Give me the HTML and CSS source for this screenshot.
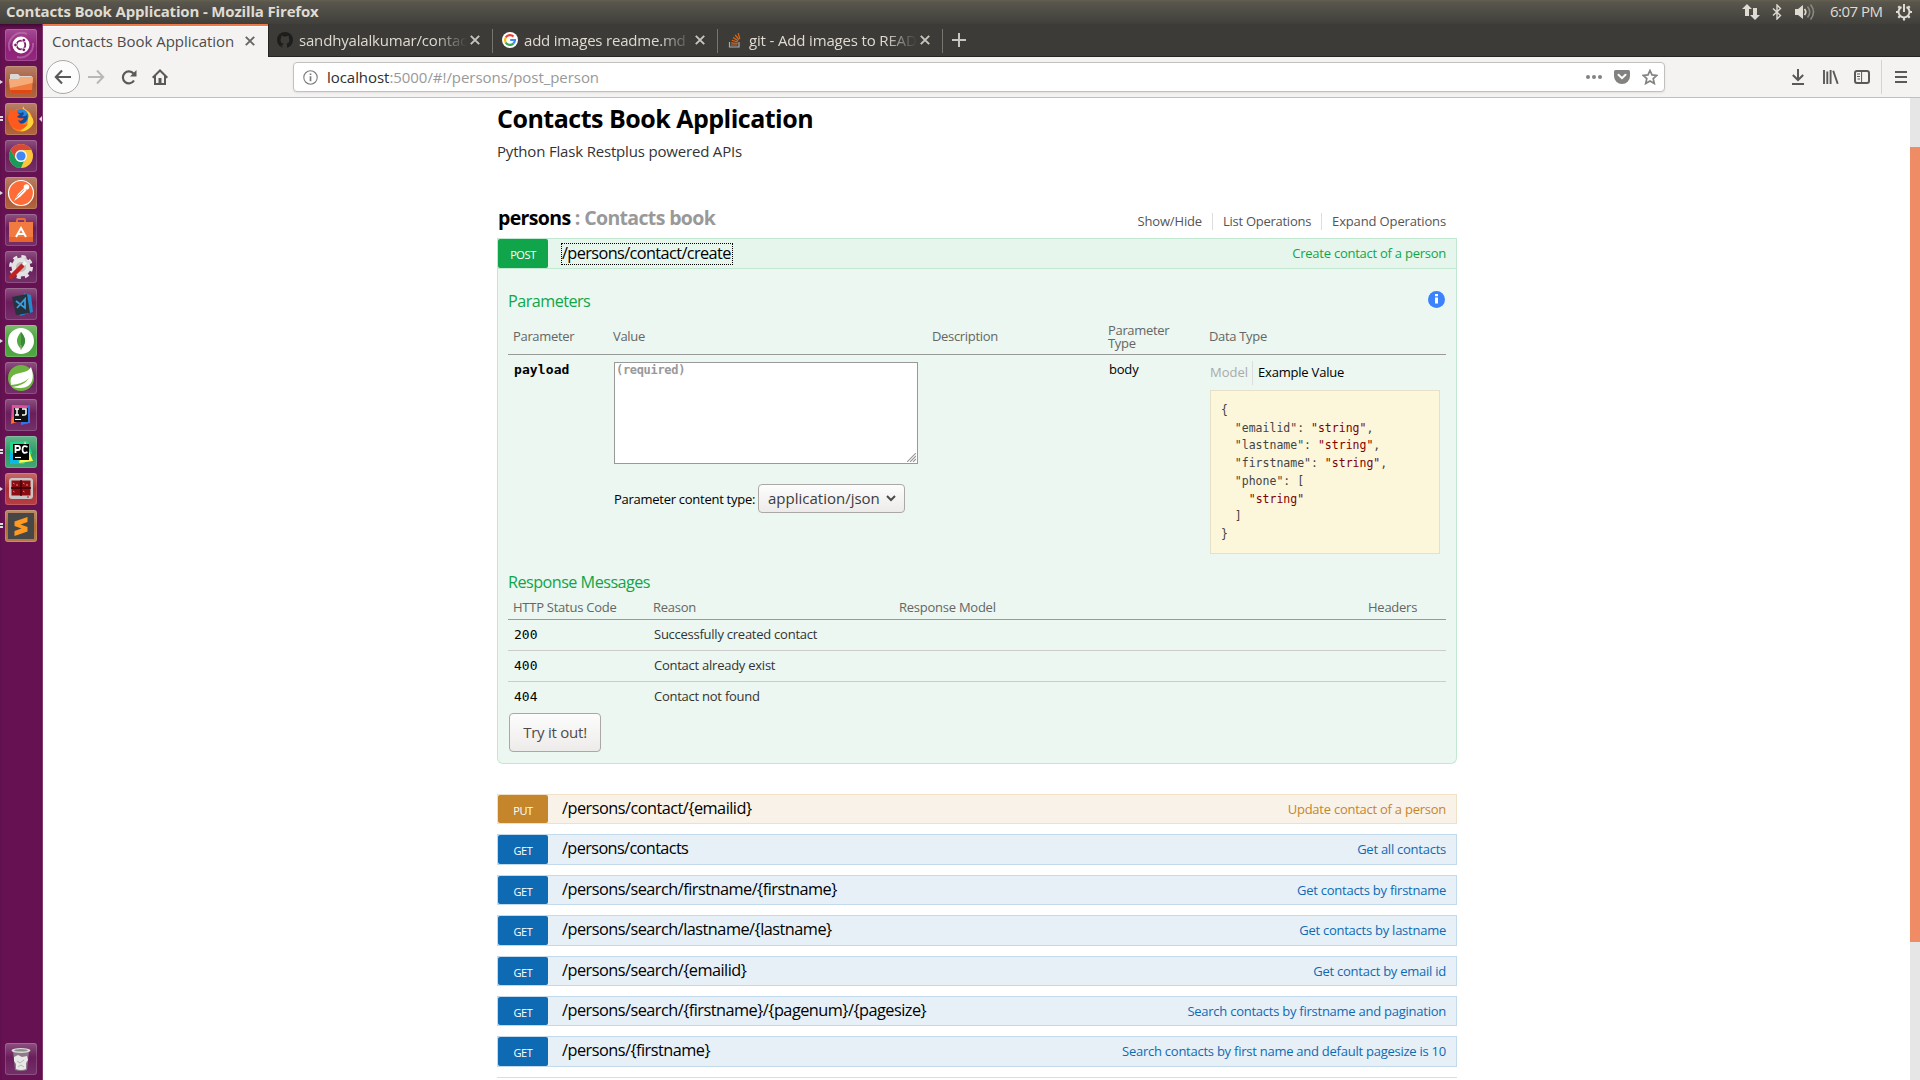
FILE: index.html
```html
<!DOCTYPE html>
<html lang="en">
<head>
<meta charset="utf-8">
<title>Contacts Book Application</title>
<link rel="stylesheet" href="styles.css">
</head>
<body>
<header class="topbar">
  <span class="topbar-title">Contacts Book Application - Mozilla Firefox</span>
  <div class="indicators">
    <svg width="18" height="18" viewBox="0 0 18 18" fill="#dfdbd2"><path d="M5 1l5 5H7v7H3V6H0zM13 17l-5-5h3V5h4v7h3z"/></svg>
    <svg class="i-bt" width="10" height="16" viewBox="0 0 10 16" fill="none" stroke="#dfdbd2" stroke-width="1.4"><path d="M1 4.5l7.500 7L5 15V1l3.500 3.500L1 11.500"/></svg>
    <svg class="i-vol" width="20" height="18" viewBox="0 0 20 18"><path d="M0 6h3l5-4v14l-5-4H0z" fill="#dfdbd2"/><path d="M9.500 6q2.500 3 0 6" fill="none" stroke="#dfdbd2" stroke-width="1.700"/><path d="M12.500 3.500q4.500 5.500 0 11M15.500 1.500q6 7.500 0 15" fill="none" stroke="#8b887f" stroke-width="1.600"/></svg>
    <span class="clock">6:07 PM</span>
    <svg class="i-gear" width="18" height="18" viewBox="0 0 18 18" fill="none" stroke="#dfdbd2"><path d="M6.500 4A5.500 5.500 0 1 0 11.500 4" stroke-width="2"/><path d="M9 1v8" stroke-width="2"/><path d="M9 15v2.500M1 9h2.500M14.500 9H17M3.300 14.700l1.800-1.800M14.700 14.700l-1.800-1.800M3.300 3.300l1.800 1.800M14.700 3.300l-1.800 1.800" stroke-width="2.200"/></svg>
  </div>
</header>
<div class="desktop">
  <nav class="launcher">
    <div class="tile t-ubuntu"><svg viewBox="0 0 32 32"><path d="M5 22A13 13 0 0 1 22 5M28 14A13 13 0 0 1 12 28" fill="none" stroke="#c27cb2" stroke-width="2" opacity=".6"/><circle cx="16" cy="16" r="8.500" fill="#fff"/><circle cx="16" cy="16" r="4.300" fill="none" stroke="#7b1a66" stroke-width="1.800"/><g fill="#7b1a66" stroke="#fff" stroke-width=".8"><circle cx="10.500" cy="16" r="1.800"/><circle cx="18.800" cy="11.200" r="1.800"/><circle cx="18.800" cy="20.800" r="1.800"/></g></svg></div>
    <div class="tile t-tan"><i class="run"></i><svg viewBox="0 0 32 32"><path d="M5 9q0-1 1-1h7l2 2h11q1 0 1 1v7H5z" fill="#dcd9d5"/><path d="M4 13h10l2-2h12l-1 14q0 2-2 2H7q-2 0-2-2z" fill="#f07a3c"/><path d="M4 13h10l2-2h12l-.4 6L5 22z" fill="#f6aa78"/><path d="M5 24h22v1q0 2-2 2H7q-2 0-2-2z" fill="#dd4814"/></svg></div>
    <div class="tile t-tan"><i class="run two"></i><i class="focus"></i><svg viewBox="0 0 32 32"><circle cx="16" cy="17" r="11.500" fill="#ff7a17"/><path d="M18 3q1 3 3 4 4 2 5 6 5 6 0 11-5 5-11 4 8-4 8-11 0-5-4-8-2-3-1-6z" fill="#ffd43a"/><circle cx="16" cy="13.500" r="7.500" fill="#2a86dd"/><path d="M12 9q3 2 6 0 2 2-1 4 5 1 5-3 2 7-3 10-7 2-9-3-1-4 2-8z" fill="#124a9c"/><path d="M5 6q2 2 4 2l3-1q0 3 3 5-2 0-3 2 4 2 7 1-2 4-6 2 3 7 10 4-5 7-12 5-8-3-8-12z" fill="#ff5a1d"/></svg></div>
    <div class="tile t-dim"><svg viewBox="0 0 32 32"><circle cx="16" cy="16" r="12" fill="#fbc63b"/><path d="M5.600 10A12 12 0 0 1 26.400 10H16a6 6 0 0 0-5.200 9z" fill="#d8483a"/><path d="M5.600 10l5.200 9a6 6 0 0 0 8 2.300L16 28A12 12 0 0 1 5.600 10z" fill="#199c58"/><circle cx="16" cy="16" r="6" fill="#f4f4f4"/><circle cx="16" cy="16" r="4.600" fill="#4285f4"/></svg></div>
    <div class="tile t-tan"><i class="run"></i><svg viewBox="0 0 32 32"><circle cx="16" cy="16" r="12.500" fill="#ff6c37" stroke="#fff" stroke-width="1.200"/><path d="M9 24l4-7 6-6 2.500 2.500-6 6z" fill="#fff"/><path d="M11 21l8-8" stroke="#ff6c37" stroke-width=".7"/><circle cx="21.500" cy="10" r="2.800" fill="#fff"/></svg></div>
    <div class="tile t-dim"><svg viewBox="0 0 32 32"><path d="M12 10V6q0-1 1-1h6q1 0 1 1v4" fill="none" stroke="#e4683a" stroke-width="2"/><path d="M4 8h24v20H4z" fill="#f07a40"/><path d="M4 23h24v5H4z" fill="#e8642a"/><path d="M11 23l5-9 5 9M12 20h8" fill="none" stroke="#fff" stroke-width="2"/></svg></div>
    <div class="tile t-dim"><svg viewBox="0 0 32 32"><circle cx="16" cy="16" r="9.500" fill="#e3e3e3"/><circle cx="16" cy="16" r="10.500" fill="none" stroke="#e3e3e3" stroke-width="3" stroke-dasharray="4.200 4.050"/><circle cx="16" cy="16" r="5" fill="#bdbdbd"/><path d="M6 26l11-11" stroke="#c5201f" stroke-width="4.500" stroke-linecap="round"/><path d="M18 14l5-5" stroke="#f4f4f4" stroke-width="3"/><path d="M21 5a4 4 0 1 0 6 5l-4 0-1-1z" fill="#d6d6d6"/></svg></div>
    <div class="tile t-dim"><svg viewBox="0 0 32 32"><path d="M19 5l7 2 2 17-13 4z" fill="#2489ca"/><path d="M7 9l15-3 3 19-14 2z" fill="#26333f"/><path d="M11 13l9 7v-9l-8 9" fill="none" stroke="#3a9ee0" stroke-width="1.800"/></svg></div>
    <div class="tile t-green"><i class="run"></i><svg viewBox="0 0 32 32"><circle cx="16" cy="16" r="13" fill="#fff"/><path d="M16 7q8 9 0 17-8-8 0-17z" fill="#4faa41"/><path d="M16 7q8 9 0 17z" fill="#3c8a38"/><path d="M16 20v5" stroke="#b0a98c" stroke-width="1"/></svg></div>
    <div class="tile t-dim"><svg viewBox="0 0 32 32"><circle cx="16" cy="16" r="13" fill="#6db33f"/><path d="M26 5q3 8 1 14-3 7-11 7-5 0-9-1 12-1 17-9-6 6-18 7-2-9 5-11 4-1 8-2 5-1 7-5z" fill="#fff"/></svg></div>
    <div class="tile t-dim"><svg viewBox="0 0 32 32"><path d="M7 6l13 1-8 16-6 2z" fill="#fc6e3a"/><path d="M15 6h10v18l-9 2z" fill="#3574e8"/><path d="M7 7l5-1 10 1v9L7 18z" fill="#e14f9f"/><path d="M9 9h14v14H9z" fill="#111"/><path d="M10 10h4M12 10v6M10 16h4M17 10h4v5q0 1-2 1h-2" fill="none" stroke="#fff" stroke-width="1.500"/><path d="M10 20.500h6" stroke="#fff"/></svg></div>
    <div class="tile t-teal"><i class="run two"></i><svg viewBox="0 0 32 32"><path d="M5 6l18-1 4 12-8 11H5z" fill="#21d789"/><path d="M20 5l8 20-14 2z" fill="#fcf84a"/><path d="M5 14l10 14H5z" fill="#0bb8e8"/><path d="M8 8h16v16H8z" fill="#000"/><path d="M10.500 17v-7h2.500q2 0 2 2t-2 2h-2.500M22.500 11q-5-2.500-5 2.500t5 2.500" fill="none" stroke="#fff" stroke-width="1.800"/><path d="M10 21.500h6" stroke="#fff" stroke-width="1.200"/></svg></div>
    <div class="tile t-red"><i class="run"></i><svg viewBox="0 0 32 32"><rect x="4" y="5" width="24" height="21" rx="3" fill="#c8c6c4"/><rect x="6.500" y="7.500" width="19" height="15" fill="#8b0c12"/><path d="M16 7v16M6 15h20" stroke="#330407" stroke-width="1.300"/><path d="M8 10l1.500 1M18 10l1.500 1M8 18l1.500 1M18 18l1.500 1M11 12h2M21 12h2" stroke="#f08080"/><path d="M22 24h2" stroke="#d00"/></svg></div>
    <div class="tile t-subl"><i class="run two"></i><svg viewBox="0 0 32 32"><rect x="3" y="3" width="26" height="26" fill="#474747"/><path d="M9.500 11.500l13-4.500v5l-7 2.500 7 2.500v4.500l-13 4.500v-5l7-2.500-7-2.500z" fill="#ff9a1f"/></svg></div>
    <div class="tile t-dim trash"><svg viewBox="0 0 32 32"><path d="M8 8h16l-2 19q-6 2-12 0z" fill="#8d7a8c"/><path d="M9 14l4-2 4 2 5-1 1 4-2 3v6q-5 2-10 0v-5l-2-3z" fill="#e8e8e6"/><path d="M12 18l3 2 4-3M13 24l3-2 3 2" fill="none" stroke="#b5b5b2"/><ellipse cx="16" cy="7.500" rx="9.500" ry="2.600" fill="#dcdcd8"/><ellipse cx="16" cy="7.300" rx="7" ry="1.200" fill="#8e8f88"/></svg></div>
  </nav>
  <div class="window">
    <div class="tabs">
      <div class="tab active"><span class="tab-label">Contacts Book Application</span><svg class="x" viewBox="0 0 10 10"><path d="M.8.8l8.400 8.400M9.200.8L.8 9.200"/></svg></div>
      <div class="tab"><svg class="fav" viewBox="0 0 16 16"><circle cx="8" cy="8" r="8" fill="#1d1d1b"/><path d="M6 16v-2.500q-3 .5-3.500-1.700M6 16v-3q0-1 .6-1.400Q3.500 11 3.500 8q0-1.400.8-2.200-.3-1 .1-2.200 1 0 2.200 1 1.400-.4 2.800 0 1.200-1 2.200-1 .4 1.200.1 2.200.8.800.8 2.200 0 3-3.100 3.600.6.500.6 1.600V16" fill="#3c3b37"/></svg><span class="tab-label fade t2">sandhyalalkumar/contac</span><svg class="x" viewBox="0 0 10 10"><path d="M.8.8l8.400 8.400M9.200.8L.8 9.200"/></svg></div>
      <div class="tab"><svg class="fav" viewBox="0 0 16 16"><circle cx="8" cy="8" r="8" fill="#fff"/><g fill="none" stroke-width="2.200"><path d="M11.500 4.500A5 5 0 0 0 3.700 5.500" stroke="#ea4335"/><path d="M3.700 5.500a5 5 0 0 0 0 5" stroke="#fbbc05"/><path d="M3.700 10.500a5 5 0 0 0 7.600 1.200" stroke="#34a853"/><path d="M11.300 11.700A5 5 0 0 0 13 8H8.200" stroke="#4285f4"/></g></svg><span class="tab-label fade t3">add images readme.md -</span><svg class="x" viewBox="0 0 10 10"><path d="M.8.8l8.400 8.400M9.200.8L.8 9.200"/></svg></div>
      <div class="tab"><svg class="fav" viewBox="0 0 16 16"><path d="M2.500 10v5h9.500v-5" fill="none" stroke="#a9adb0" stroke-width="1.200"/><path d="M4 13h6.500M4.200 10.800l6.400.7M4.800 8.200l6 1.800M6 5.400l5.200 3.300M8.200 3l3.800 4.700M11.200 1.200l1.600 5.600" stroke="#d96a1b" stroke-width="1.200"/></svg><span class="tab-label fade t4">git - Add images to READ</span><svg class="x" viewBox="0 0 10 10"><path d="M.8.8l8.400 8.400M9.200.8L.8 9.200"/></svg></div>
      <svg class="plus" width="14" height="14" viewBox="0 0 14 14"><path d="M7 0v14M0 7h14" stroke="#c9c6bf" stroke-width="2"/></svg>
    </div>
    <div class="toolbar">
      <div class="back"><svg width="18" height="16" viewBox="0 0 18 16"><path d="M8 1.500L1.800 8 8 14.500M2 8h15" fill="none" stroke="#5a5957" stroke-width="2.100"/></svg></div>
      <svg class="fwd" width="18" height="16" viewBox="0 0 18 16"><path d="M10 1.500L16.200 8 10 14.500M16 8H1" fill="none" stroke="#b9b8b6" stroke-width="2"/></svg>
      <svg class="reload" width="16" height="16" viewBox="0 0 16 16"><path d="M13 11.500A6 6 0 1 1 12.500 4.500" fill="none" stroke="#5a5957" stroke-width="2.200"/><path d="M15.500 1v6.500H9z" fill="#5a5957"/></svg>
      <svg class="home" width="16" height="16" viewBox="0 0 16 16"><path d="M.7 8.700L8 1.500l7.300 7.200M3 7v8h10V7" fill="none" stroke="#5a5957" stroke-width="2"/><path d="M6.500 15V9h3v6z" fill="#5a5957"/></svg>
      <div class="urlbar">
        <svg class="info" width="15" height="15" viewBox="0 0 15 15"><circle cx="7.500" cy="7.500" r="6.700" fill="none" stroke="#7c7c7b" stroke-width="1.100"/><path d="M7.500 3.400v1.700M7.500 6.300v5" stroke="#7c7c7b" stroke-width="1.700"/></svg>
        <span class="url"><b>localhost</b>:5000/#!/persons/post_person</span>
        <svg class="dots" width="16" height="4" viewBox="0 0 16 4" fill="#838280"><circle cx="2" cy="2" r="2"/><circle cx="8" cy="2" r="2"/><circle cx="14" cy="2" r="2"/></svg>
        <svg class="pocket" width="16" height="14" viewBox="0 0 16 14"><path d="M1.500 0h13Q16 0 16 1.500V6A8 8 0 0 1 0 6V1.500Q0 0 1.500 0z" fill="#838280"/><path d="M4.500 4.800L8 8.200l3.500-3.400" fill="none" stroke="#fff" stroke-width="2" stroke-linecap="round"/></svg>
        <svg class="star" width="16" height="16" viewBox="0 0 16 16"><path d="M8 1.500l2 4.400 4.800.5-3.600 3.200 1.100 4.900L8 12l-4.300 2.500 1.100-4.900L1.200 6.400 6 5.900z" fill="none" stroke="#838280" stroke-width="1.700"/></svg>
      </div>
      <svg class="dl" width="12" height="16" viewBox="0 0 12 16"><path d="M6 0v10.500M.8 6L6 11l5.200-5M0 15h12" fill="none" stroke="#5a5957" stroke-width="2"/></svg>
      <svg class="lib" width="16" height="14" viewBox="0 0 16 14"><path d="M1 0v14M4.300 1.500V14M7.600 0v14M10.200 .8l4.500 13" fill="none" stroke="#5a5957" stroke-width="1.900"/></svg>
      <svg class="side" width="16" height="14" viewBox="0 0 16 14"><rect x="1" y="1" width="14" height="12" rx="2" fill="none" stroke="#5a5957" stroke-width="2"/><path d="M7.600 1v12M3 4h3M3 6.500h3M3.500 9H6" stroke="#5a5957"/></svg>
      <span class="sep"></span>
      <svg class="menu" width="12" height="12" viewBox="0 0 12 12"><path d="M0 1h12M0 6h12M0 11h12" stroke="#5a5957" stroke-width="2"/></svg>
    </div>
    <div class="viewport">
      <main class="page">
        <h1>Contacts Book Application</h1>
        <p class="lead">Python Flask Restplus powered APIs</p>
        <div class="resource">
          <h2>persons <span>: Contacts book</span></h2>
          <ul class="ops"><li class="o1">Show/Hide</li><li class="o2">List Operations</li><li class="o3">Expand Operations</li></ul>
        </div>
        <div class="op post"><span class="verb">POST</span><span class="path focused">/persons/contact/create</span><span class="desc">Create contact of a person</span></div>
        <section class="panel">
          <div class="panel-head"><h4>Parameters</h4><svg width="17" height="17" viewBox="0 0 17 17"><circle cx="8.500" cy="8.500" r="8.500" fill="#3b82fb"/><path d="M7 3h3v2.300H7zM7 6.500h3v6H7z" fill="#fff"/></svg></div>
          <div class="params head"><span class="c1">Parameter</span><span>Value</span><span>Description</span><span class="ptype">Parameter Type</span><span>Data Type</span></div>
          <div class="params row">
            <span class="mono pname">payload</span>
            <div class="value">
              <div class="textarea">(required)<svg width="9" height="9" viewBox="0 0 9 9"><path d="M0 9l9-9M3 9l6-6M6 9l3-3" stroke="#999" stroke-width="1.100"/></svg></div>
              <div class="ctype"><span>Parameter content type:</span><div class="select">application/json<svg width="10" height="7" viewBox="0 0 10 7"><path d="M1 1l4 4 4-4" fill="none" stroke="#4c4c4c" stroke-width="2"/></svg></div></div>
            </div>
            <span></span>
            <span class="pin">body</span>
            <div class="dtype">
              <div class="switch"><span class="model">Model</span><span class="example">Example Value</span></div>
<pre class="snippet">{
  "emailid": <b>"string"</b>,
  "lastname": <b>"string"</b>,
  "firstname": <b>"string"</b>,
  "phone": [
    <b>"string"</b>
  ]
}</pre>
            </div>
          </div>
          <h4 class="rm">Response Messages</h4>
          <div class="resp head"><span>HTTP Status Code</span><span>Reason</span><span>Response Model</span><span>Headers</span></div>
          <div class="resp row"><span class="mono">200</span><span>Successfully created contact</span></div>
          <div class="resp row"><span class="mono">400</span><span>Contact already exist</span></div>
          <div class="resp row"><span class="mono">404</span><span>Contact not found</span></div>
          <div class="try">Try it out!</div>
        </section>
        <div class="oplist">
          <div class="op put"><span class="verb">PUT</span><span class="path tpl">/persons/contact/{emailid}</span><span class="desc">Update contact of a person</span></div>
          <div class="op get"><span class="verb">GET</span><span class="path">/persons/contacts</span><span class="desc">Get all contacts</span></div>
          <div class="op get"><span class="verb">GET</span><span class="path tpl">/persons/search/firstname/{firstname}</span><span class="desc">Get contacts by firstname</span></div>
          <div class="op get"><span class="verb">GET</span><span class="path tpl">/persons/search/lastname/{lastname}</span><span class="desc">Get contacts by lastname</span></div>
          <div class="op get"><span class="verb">GET</span><span class="path tpl">/persons/search/{emailid}</span><span class="desc">Get contact by email id</span></div>
          <div class="op get"><span class="verb">GET</span><span class="path tpl">/persons/search/{firstname}/{pagenum}/{pagesize}</span><span class="desc">Search contacts by firstname and pagination</span></div>
          <div class="op get"><span class="verb">GET</span><span class="path tpl">/persons/{firstname}</span><span class="desc">Search contacts by first name and default pagesize is 10</span></div>
        </div>
        <div class="rule"></div>
      </main>
      <div class="scroll"><div class="thumb"></div></div>
    </div>
  </div>
</div>
</body>
</html>
```
FILE: styles.css
```css
* { box-sizing: border-box; }
body { margin: 0; width: 1920px; height: 1080px; overflow: hidden; background: #fff; font: 13px "Open Sans", sans-serif; }
h1, h2, h4, p, ul, pre { margin: 0; padding: 0; }
svg { display: block; flex: none; }

/* system bar */
.topbar { height: 24px; display: flex; justify-content: space-between; padding: 0 7px 0 6px; background: linear-gradient(#65614f, #59564d 2px, #403f3a); color: #dfdbd2; font-size: 15px; line-height: 24px; }
.topbar-title { font-weight: bold; letter-spacing: -.16px; line-height: 22px; }
.indicators { display: flex; align-items: center; }
.i-bt { margin-left: 12px; }
.i-vol { margin-left: 13px; }
.clock { margin-left: 15px; width: 65px; letter-spacing: -.5px; white-space: nowrap; line-height: 22px; height: 24px; }

.desktop { display: flex; height: 1056px; }

/* launcher */
.launcher { width: 43px; flex: none; display: flex; flex-direction: column; gap: 5px; padding: 5px 0 5px 5px; background: #651152; border-right: 1px solid #82376f; box-shadow: inset 0 4px 4px -3px #2b0623; }
.tile { position: relative; width: 32px; height: 32px; flex: none; border-radius: 3px; box-shadow: inset 0 0 0 1px rgba(255,255,255,.16); }
.tile svg { width: 32px; height: 32px; }
.trash { margin-top: auto; }
.t-ubuntu { background: linear-gradient(#a54c93, #8e1f78 60%, #93297e); }
.t-tan { background: linear-gradient(#b78068, #a75636 60%, #b1663f); }
.t-dim { background: linear-gradient(#8d5080, #6a1d5a 45%, #74306a); }
.t-green { background: linear-gradient(#7cba6c, #44a038 50%, #52a946); }
.t-teal { background: linear-gradient(#68b38c, #2c9a63 50%, #43a676); }
.t-red { background: linear-gradient(#c66a68, #ac2f37 50%, #b63e45); }
.t-subl { background: linear-gradient(#b98a68, #ae6c33 50%, #b97a48); }
.run { position: absolute; left: -5px; top: 14px; border: 2px solid transparent; border-left: 3px solid #ddd; border-right: 0; }
.run.two { top: 13px; height: 5px; width: 3px; border: solid #ddd; border-width: 2px 0; }
.focus { position: absolute; left: 34px; top: 13px; border: 3px solid transparent; border-right: 3px solid #ddd; border-left: 0; }

/* browser chrome */
.window { flex: 1; min-width: 0; display: flex; flex-direction: column; }
.tabs { height: 33px; flex: none; display: flex; background: #3c3b37; border-bottom: 1px solid #262522; }
.tab { width: 225px; display: flex; align-items: center; padding: 0 13px 0 9px; color: #dfdbd2; font-size: 15px; line-height: 32px; background: linear-gradient(#77756e, #77756e) right 5px / 1px 24px no-repeat; }
.tab.active { height: 33px; background: #f4f3f2; border-top: 2px solid #f07746; color: #4c4c4c; line-height: 28px; padding-bottom: 2px; box-shadow: inset 0 1px 0 #fff; }
.tab.active + .tab { border-left: 1px solid #262522; padding-left: 8px; }
.tab-label { flex: 1; white-space: nowrap; overflow: hidden; letter-spacing: -.02px; }
.fade { -webkit-mask: linear-gradient(90deg, #000 136px, transparent 168px); mask: linear-gradient(90deg, #000 136px, transparent 168px); margin-right: 3px; }
.t2 { letter-spacing: -.18px; }
.t3 { letter-spacing: -.2px; }
.t4 { letter-spacing: -.16px; }
.fav { width: 16px; height: 16px; margin-right: 6px; }
.x { width: 10px; height: 10px; fill: none; stroke: #c9c6bf; stroke-width: 1.9; }
.active .x { stroke: #666563; }
.plus { margin: 9px 0 0 9px; }
.toolbar { height: 41px; flex: none; display: flex; align-items: center; padding-left: 3px; background: #f4f3f2; border-bottom: 1px solid #c0c1bf; }
.back { width: 34px; height: 34px; border: 1px solid #a9a8a6; border-radius: 50%; background: #fcfcfc; display: flex; align-items: center; justify-content: center; }
.fwd { margin-left: 7px; }
.reload { margin-left: 16px; }
.home { margin-left: 15px; }
.urlbar { width: 1372px; height: 30px; margin-left: 125px; padding: 0 6px 0 9px; display: flex; align-items: center; background: #fff; border: 1px solid #c2c0bd; border-radius: 4px; box-shadow: 0 1px 2px rgba(0,0,0,.08); }
.url { flex: 1; margin-left: 9px; font-size: 15px; line-height: 28px; color: #999; letter-spacing: -.05px; }
.url b { font-weight: normal; color: #2e2e2e; }
.pocket { margin-left: 12px; }
.star { margin-left: 12px; }
.dl { margin-left: 127px; }
.lib { margin-left: 19px; }
.side { margin-left: 15px; }
.sep { width: 1px; height: 34px; margin-left: 11px; background: #d5d3d1; }
.menu { margin-left: 13px; }

/* page */
.viewport { flex: 1; min-height: 0; display: flex; overflow: hidden; background: #fff; }
.page { width: 960px; margin-left: 454px; padding-top: 3px; height: 982px; overflow: hidden; display: flex; flex-direction: column; }
.page > * { flex: none; }
.scroll { width: 10px; margin-left: auto; background: #e6e6e6; padding-top: 49px; }
.thumb { height: 795px; background: #f08c65; }
h1 { font-size: 25px; line-height: 34px; letter-spacing: -.5px; color: #000; }
.lead { margin-top: 5px; font-size: 15px; line-height: 22px; letter-spacing: -.18px; color: #333; }
.resource { margin-top: 42px; height: 34px; display: flex; justify-content: space-between; }
h2 { font-size: 19.500px; line-height: 28px; letter-spacing: -.65px; padding-left: 1px; color: #000; }
h2 span { color: #999; }
.ops { display: flex; list-style: none; padding: 9px 11px 0 0; color: #555; line-height: 17px; height: 26px; }
.ops li + li { margin-left: 10px; padding-left: 10px; border-left: 1px solid #ddd; }
.o1 { letter-spacing: -.14px; }
.o2 { letter-spacing: -.27px; }
.o3 { letter-spacing: -.14px; }

.op { display: flex; height: 30.400px; border: 1px solid; padding-right: 10px; }
.verb { width: 50px; border-radius: 2px; color: #fff; font-size: 11px; line-height: 31px; text-align: center; letter-spacing: -.4px; }
.path { margin-left: 14px; font-size: 16.300px; line-height: 27px; letter-spacing: -.62px; color: #000; white-space: nowrap; }
.tpl { letter-spacing: -.51px; }
.focused { outline: 1px dotted #000; margin-top: 5px; height: 20px; line-height: 18px; padding-right: 1px; letter-spacing: -.6px; }
.desc { margin-left: auto; line-height: 29px; letter-spacing: -.25px; white-space: nowrap; }
.post { height: 31px; background: #e7f6ec; border-color: #c3e8d1; color: #10a54a; }
.post .verb { background: #10a54a; line-height: 32px; }
.put { background: #f9f2e9; border-color: #f0e0ca; color: #c5862b; }
.put .verb { background: #c5862b; }
.get { background: #e7f0f7; border-color: #c3d9ec; color: #0f6ab4; }
.get .verb { background: #0f6ab4; }

.panel { height: 495px; background: #ebf7f0; border: 1px solid #c3e8d1; border-top: 0; border-radius: 0 0 6px 6px; padding: 0 10px; overflow: hidden; }
.panel-head { display: flex; justify-content: space-between; padding-top: 21px; height: 55px; }
.panel-head svg { margin: 1px 1px 0 0; }
h4 { font-size: 16.200px; font-weight: normal; line-height: 22px; letter-spacing: -.53px; color: #10a54a; }
.head { color: #666; letter-spacing: -.33px; }
.params { display: grid; grid-template-columns: 100px 319px 176px 101px 1fr; }
.params.head { height: 31px; padding-left: 5px; align-items: center; line-height: 13px; border-bottom: 1px solid #999; }
.params.head span { padding-bottom: 6px; }
.params.head .ptype { width: 70px; padding-bottom: 5px; }
.params.row { height: 213px; padding: 7px 0 0 6px; color: #000; }
.mono { font-family: "DejaVu Sans Mono", monospace; font-size: 13px; color: #000; }
.pname { font-weight: bold; line-height: 15px; letter-spacing: .1px; }
.textarea { position: relative; width: 304px; height: 102px; margin: 0; border: 1px solid #999; background: #fff; color: #999; font: bold 12px/14px "DejaVu Sans Mono", monospace; letter-spacing: -.32px; padding-left: 1px; }
.textarea svg { position: absolute; right: 1px; bottom: 1px; }
.ctype { display: flex; margin-top: 20px; align-items: center; }
.ctype span { width: 144px; letter-spacing: -.27px; white-space: nowrap; padding-top: 1px; }
.select { width: 147px; height: 29px; display: flex; align-items: center; justify-content: space-between; padding: 0 8px 1px 9px; border: 1px solid #aaa8a5; border-radius: 4px; background: linear-gradient(#fdfdfd, #edebea); font-size: 15px; color: #3c3c3c; }
.pin { line-height: 14px; letter-spacing: -.2px; }
.switch { display: flex; line-height: 22px; margin-top: -1px; height: 24px; }
.model { color: #aaa; width: 43px; border-right: 1px solid #ddd; }
.example { padding-left: 5px; letter-spacing: -.2px; }
.snippet { margin-top: 5px; width: 230px; height: 164px; padding: 11px 10px; border: 1px solid #e5e0c6; background: #fcf6db; color: #444; font: 11.500px/17.700px "DejaVu Sans Mono", monospace; }
.snippet b { font-weight: normal; color: #800000; }
.rm { margin-top: 3px; }
.resp { display: grid; grid-template-columns: 140px 246px 469px 1fr; letter-spacing: -.25px; }
.resp.head { height: 26px; line-height: 27px; padding-left: 5px; border-bottom: 1px solid #999; margin-top: 1px; }
.resp.row { height: 31px; line-height: 28px; padding-left: 6px; color: #333; border-bottom: 1px solid #ccc; }
.resp.row:nth-last-child(2) { border: 0; }
.resp .mono { line-height: 29px; letter-spacing: 0; }
.try { width: 92px; height: 39px; margin-left: 1px; border: 1px solid #aaa8a5; border-radius: 4px; background: linear-gradient(#fdfdfd, #edebea); font-size: 15px; line-height: 37px; letter-spacing: -.24px; text-align: center; color: #4c4c4c; }
.oplist { margin-top: 30px; display: flex; flex-direction: column; gap: 10px; }
.rule { margin-top: 10px; height: 1px; background: #ddd; }
```
